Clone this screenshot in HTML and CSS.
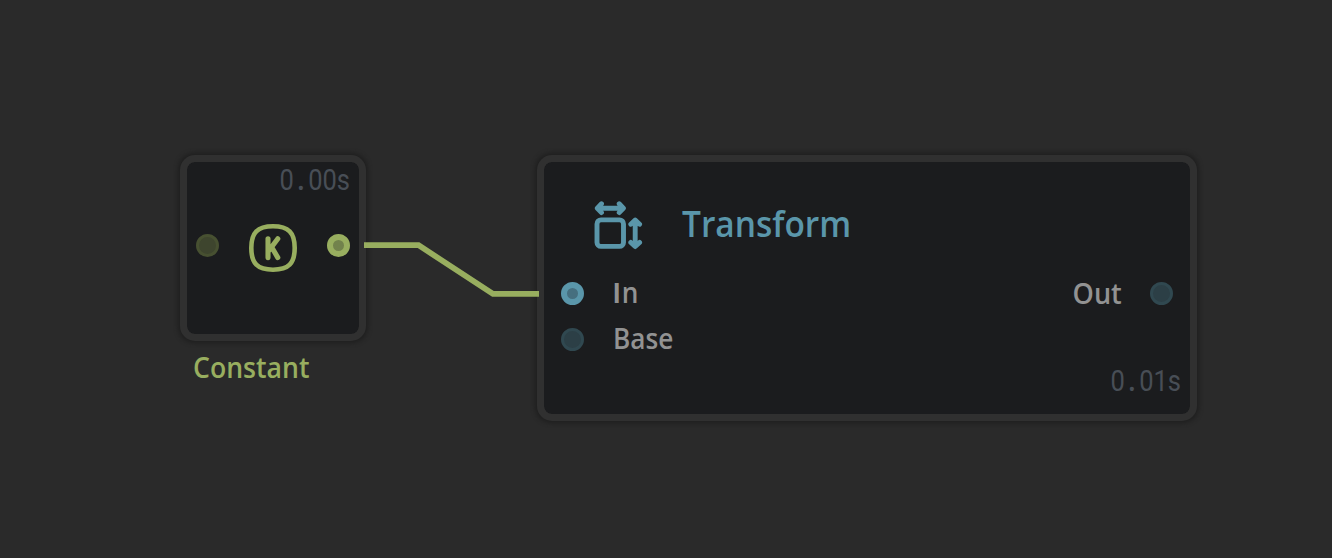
FILE: index.html
```html
<!DOCTYPE html>
<html lang="en">
<head>
<meta charset="utf-8">
<title>Node graph</title>
<link rel="stylesheet" href="styles.css">
</head>
<body>
<main class="canvas">
  <section class="node node-constant">
    <div class="time">0<span class="dot">.</span>00s</div>
    <div class="constant-row">
      <span class="port green"></span>
      <svg class="constant-icon" width="48" height="48" viewBox="0 0 48 48" fill="none" stroke="currentColor" stroke-linecap="round" stroke-linejoin="round">
        <path stroke-width="4.6" d="M24 2.3C39.5 2.3 45.7 8.5 45.7 24S39.5 45.7 24 45.7 2.3 39.5 2.3 24 8.5 2.3 24 2.3Z"/>
        <path stroke-width="5.1" d="M19 14.800V33.600M28.800 14.800L19.600 27M22.600 23L28.800 33.600"/>
      </svg>
      <span class="port green connected"></span>
    </div>
  </section>
  <div class="caption">Constant</div>
  <section class="node node-transform">
    <header class="title-row">
      <svg width="50" height="50" viewBox="0 0 50 50" fill="none" stroke="currentColor" stroke-width="4.900" stroke-linecap="round" stroke-linejoin="round">
        <rect x="4" y="18.900" width="26.500" height="26.500" rx="4"/>
        <path d="M4.500 7.200H30M8.500 2.800L4.300 7.200 8.500 11.600M26.200 2.800L30.400 7.200 26.200 11.600"/>
        <path d="M42.200 20V45M37.800 23.200L42.200 19 46.600 23.200M37.800 41.400L42.200 45.600 46.600 41.400"/>
      </svg>
      <h1 class="title">Transform</h1>
    </header>
    <div class="port-row">
      <span class="port blue connected"></span><span class="label label-in"><span class="plain-cap">I</span>n</span>
      <span class="label label-out">Out</span><span class="port blue"></span>
    </div>
    <div class="port-row">
      <span class="port blue"></span><span class="label label-base">Base</span>
    </div>
    <div class="time">0<span class="dot">.</span>01s</div>
  </section>
  <svg class="wire" width="175" height="65" viewBox="0 0 175 65">
    <path d="M0 10.2H54.5L129 58.8H175"/>
  </svg>
</main>
</body>
</html>
```
FILE: styles.css
```css
* { box-sizing: border-box; }
body { margin: 0; background: #2a2a2a; font-family: "Open Sans", "Noto Sans", sans-serif; }
.canvas { position: relative; width: 1332px; height: 558px; overflow: hidden; }
.node {
  position: absolute;
  border: 7px solid #303030;
  border-radius: 15px;
  background: #1b1c1e;
  background-clip: padding-box;
  box-shadow: 0 0 4px 1.5px #1f1f1f;
  display: flex;
  flex-direction: column;
}
.node-constant { left: 180px; top: 155px; width: 186px; height: 186px; }
.node-transform { left: 537px; top: 155px; width: 660px; height: 266px; padding-top: 38px; }
.time {
  font: 400 29px/36px Roboto, sans-serif;
  color: #484e56;
  text-align: right;
  margin-right: 9px;
  white-space: nowrap;
  transform: scaleX(.88);
  transform-origin: right;
}
.dot { display: inline-block; width: 16.3px; text-align: center; font-weight: 700; }
.constant-row { display: flex; align-items: center; justify-content: space-between; padding: 0 9px; margin-top: 20px; }
.constant-icon { color: #98ae5f; margin-top: 6px; }
.port { width: 23px; height: 23px; border-radius: 50%; flex: none; }
.green { background: #3e452e; border: 3px solid #475031; }
.green.connected { background: #72824c; border: 6px solid #98ae5f; }
.blue { background: #2c3f46; border: 3px solid #304850; }
.blue.connected { background: #466f7f; border: 6px solid #5a96aa; }
.title-row { display: flex; height: 52px; padding-left: 49px; gap: 39px; color: #5a96aa; }
.title-row svg { margin-top: 1px; }
.title { margin: -1px 0 0; font-size: 36.5px; line-height: 48px; font-weight: 600; transform: scaleX(.917); transform-origin: left; }
.port-row { display: flex; align-items: center; height: 46px; padding: 0 17px; }
.title-row + .port-row { margin-top: 18px; }
.label { font-size: 28.5px; line-height: 40px; font-weight: 600; color: #929292; margin-left: 29px; transform: scaleX(.92); transform-origin: left; }
.label-base { margin-top: -3px; }
.plain-cap { font-family: "Liberation Sans", sans-serif; font-size: 29px; font-weight: 700; margin-right: 1.5px; }
.label-in { margin-top: -1px; }
.label-out { margin-left: auto; margin-right: 28px; transform: scaleX(.95); transform-origin: right; }
.node-transform .time { margin-top: 1px; }
.caption { position: absolute; left: 192.5px; top: 347px; font-size: 28.5px; line-height: 40px; font-weight: 600; color: #98ae5f; transform: scaleX(.935); transform-origin: left; }
.wire { position: absolute; left: 364px; top: 235px; }
.wire path { fill: none; stroke: #98ae5f; stroke-width: 5.7; }
```
